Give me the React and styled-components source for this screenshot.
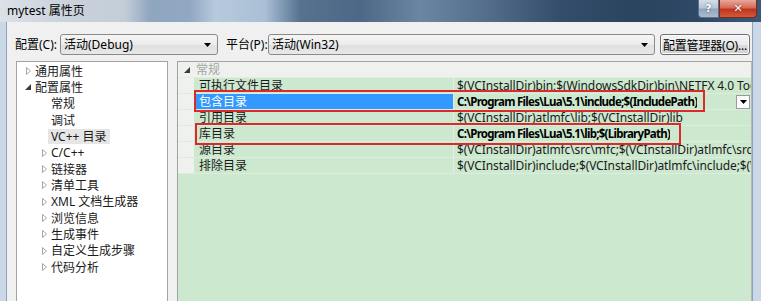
import React from 'react';
import styled, { createGlobalStyle } from 'styled-components';

const GlobalStyle = createGlobalStyle`
  html, body { margin: 0; padding: 0; background: #f0f0f0; overflow: hidden; }
  body { font-family: "Noto Sans", "Noto Sans CJK SC", sans-serif; font-size: 12px; color: #000; }
  * { box-sizing: border-box; }
`;

const Window = styled.div`
  width: 761px;
  height: 301px;
  display: flex;
  flex-direction: column;
  overflow: hidden;
  background: #f0f0f0;
`;

const TitleBar = styled.div`
  height: 22px;
  flex: none;
  display: flex;
  align-items: flex-start;
  justify-content: space-between;
  background: linear-gradient(to right,
    #dbe1e8 0px, #cbd3dc 60px, #c3cdd8 125px, #8fa6bf 150px, #90a8c2 190px,
    #b7c9dc 215px, #aac0d6 265px, #56728f 300px, #4c6886 360px, #6a86a2 420px,
    #56708d 480px, #334d6a 560px, #2a435f 640px, #2f4966 700px, #3d5876 761px);
`;

const TitleText = styled.span`
  padding: 3px 0 0 7px;
  font-size: 12px;
  line-height: 16px;
  color: #000;
`;

const Controls = styled.div`
  display: flex;
  margin-right: 4px;
`;

const CaptionButton = styled.div`
  height: 18px;
  width: ${p => p.$w}px;
  display: flex;
  align-items: center;
  justify-content: center;
  border: 1px solid ${p => (p.$close ? '#7a2a20' : '#5c7188')};
  border-top: none;
  border-radius: ${p => (p.$close ? '0 0 4px 0' : '0 0 0 4px')};
  background: ${p => (p.$close
    ? 'linear-gradient(#e9a89a, #d66b56 45%, #c0341c 55%, #d25a3c)'
    : 'linear-gradient(#d4dfea, #b5c6d8 45%, #91a7be 55%, #a9bdd1)')};
  color: #fff;
  font-family: "DejaVu Sans", sans-serif;
  font-weight: bold;
  font-size: 11px;
  text-shadow: 0 0 2px rgba(0,0,0,0.6);
`;

const Body = styled.div`
  flex: 1;
  display: flex;
  min-height: 0;
`;

const Edge = styled.div`
  width: ${p => p.$w}px;
  flex: none;
  background: #c9d7e6;
  border-${p => p.$side}: 1px solid #8ea3ba;
`;

const Client = styled.div`
  flex: 1;
  min-width: 0;
  display: flex;
  flex-direction: column;
  padding: 12px 0 0 0;
`;

const ConfigRow = styled.div`
  display: flex;
  align-items: center;
  height: 21px;
  padding-left: 8px;
`;

const Label = styled.span`
  width: ${p => p.$w}px;
  flex: none;
  line-height: 21px;
  white-space: nowrap;
`;

const Combo = styled.div`
  width: ${p => p.$w}px;
  height: 21px;
  flex: none;
  display: flex;
  align-items: center;
  justify-content: space-between;
  padding: 0 6px 0 3px;
  border: 1px solid #8a8a8a;
  border-radius: 3px;
  background: linear-gradient(#f5f5f5, #ececec 50%, #dfdfdf 51%, #e8e8e8);
  margin-right: ${p => p.$mr}px;
`;

const ComboText = styled.span`
  line-height: 19px;
  white-space: nowrap;
`;

const Arrow = styled.svg`
  flex: none;
`;

const PushButton = styled.div`
  width: 90px;
  height: 21px;
  flex: none;
  margin-left: 5px;
  display: flex;
  align-items: center;
  justify-content: center;
  border: 1px solid #707070;
  border-radius: 3px;
  background: linear-gradient(#f4f4f4, #ebebeb 50%, #dddddd 51%, #cfcfcf);
  box-shadow: inset 0 0 0 1px #fcfcfc;
  white-space: nowrap;
  letter-spacing: -0.2px;
`;

const Panels = styled.div`
  display: flex;
  gap: 9px;
  margin-top: 6px;
  padding-left: 9px;
  height: 250px;
  flex: none;
`;

const TreePanel = styled.div`
  width: 152px;
  flex: none;
  background: #fff;
  border: 1px solid #a3a3a3;
  padding-top: 1px;
`;

const TreeRow = styled.div`
  height: 16.33px;
  display: flex;
  align-items: center;
  padding-left: ${p => 7 + p.$level * 16}px;
`;

const Twisty = styled.span`
  width: 8px;
  height: 16px;
  flex: none;
  display: flex;
  align-items: center;
  justify-content: center;
`;

const TreeLabel = styled.span`
  padding: 0 3px;
  line-height: 15px;
  white-space: nowrap;
  color: #1a1a1a;
  background: ${p => (p.$selected ? '#e6e6e6' : 'transparent')};
`;

const GridPanel = styled.div`
  width: 575px;
  flex: none;
  position: relative;
  background: #cce8cf;
  border: 1px solid #a3a3a3;
  border-right-color: #b8b8b8;
`;

const CategoryRow = styled.div`
  height: 16px;
  display: flex;
  align-items: center;
  background: #eef1ee;
  padding-left: 6px;
  border-bottom: 1px solid #e4ebe4;
`;

const CategoryText = styled.span`
  margin-left: 6px;
  color: #a2a6a2;
  line-height: 15px;
`;

const PropRow = styled.div`
  display: grid;
  grid-template-columns: 16px 259px 1fr;
  height: 16px;
  border-bottom: 1px solid #dcecdd;
`;

const Gutter = styled.div`
  background: #eef1ee;
`;

const NameCell = styled.div`
  padding-left: 5px;
  line-height: 15px;
  white-space: nowrap;
  overflow: hidden;
  color: ${p => (p.$selected ? '#fff' : '#1a1a1a')};
  background: ${p => (p.$selected ? '#3399ff' : 'transparent')};
`;

const ValueCell = styled.div`
  display: flex;
  align-items: center;
  justify-content: space-between;
  padding: 0 0 0 3px;
  border-left: 1px solid #e2efe3;
  overflow: hidden;
  min-width: 0;
`;

const ValueText = styled.span`
  line-height: 15px;
  white-space: nowrap;
  overflow: hidden;
  font-size: ${p => (p.$bold ? '11.5px' : '12px')};
  font-weight: ${p => (p.$bold ? 700 : 400)};
  color: ${p => (p.$bold ? '#000' : '#1a1a1a')};
  letter-spacing: ${p => (p.$bold ? '-0.72px' : '-0.1px')};
`;

const CellDrop = styled.div`
  width: 14px;
  height: 14px;
  flex: none;
  margin-right: 1px;
  display: flex;
  align-items: center;
  justify-content: center;
  background: #fdfdfd;
  border: 1px solid #9a9a9a;
`;

const Mark = styled.div`
  position: absolute;
  left: ${p => p.$x}px;
  top: ${p => p.$y}px;
  width: ${p => p.$w}px;
  height: ${p => p.$h}px;
  border: 2px solid #dc2a2a;
  pointer-events: none;
`;

const DownArrow = ({ size = 7 }) => (
  <Arrow width={size} height={4} viewBox="0 0 7 4">
    <polygon points="0,0 7,0 3.5,4" fill="#000" />
  </Arrow>
);

const Collapsed = () => (
  <svg width="5" height="8" viewBox="0 0 5 8">
    <polygon points="0.5,0.5 4.5,4 0.5,7.5" fill="#fff" stroke="#a6a6a6" strokeWidth="1" />
  </svg>
);

const Expanded = () => (
  <svg width="6" height="6" viewBox="0 0 6 6">
    <polygon points="6,0 6,6 0,6" fill="#3c3c3c" />
  </svg>
);

const treeItems = [
  { label: '通用属性', level: 0, state: 'c' },
  { label: '配置属性', level: 0, state: 'e' },
  { label: '常规', level: 1 },
  { label: '调试', level: 1 },
  { label: 'VC++ 目录', level: 1, selected: true },
  { label: 'C/C++', level: 1, state: 'c' },
  { label: '链接器', level: 1, state: 'c' },
  { label: '清单工具', level: 1, state: 'c' },
  { label: 'XML 文档生成器', level: 1, state: 'c' },
  { label: '浏览信息', level: 1, state: 'c' },
  { label: '生成事件', level: 1, state: 'c' },
  { label: '自定义生成步骤', level: 1, state: 'c' },
  { label: '代码分析', level: 1, state: 'c' },
];

const props = [
  { name: '可执行文件目录', value: '$(VCInstallDir)bin;$(WindowsSdkDir)bin\\NETFX 4.0 Tools;$(WindowsSdkDir)bin;$(VSInstallDir)Common7\\Tools\\bin' },
  { name: '包含目录', value: 'C:\\Program Files\\Lua\\5.1\\include;$(IncludePath)', bold: true, selected: true },
  { name: '引用目录', value: '$(VCInstallDir)atlmfc\\lib;$(VCInstallDir)lib' },
  { name: '库目录', value: 'C:\\Program Files\\Lua\\5.1\\lib;$(LibraryPath)', bold: true },
  { name: '源目录', value: '$(VCInstallDir)atlmfc\\src\\mfc;$(VCInstallDir)atlmfc\\src\\mfcm;$(VCInstallDir)atlmfc\\src\\atl;$(VCInstallDir)crt\\src' },
  { name: '排除目录', value: '$(VCInstallDir)include;$(VCInstallDir)atlmfc\\include;$(WindowsSdkDir)include;$(FrameworkSDKDir)\\include' },
];

export default function App() {
  return (
    <>
      <GlobalStyle />
      <Window>
        <TitleBar>
          <TitleText>mytest 属性页</TitleText>
          <Controls>
            <CaptionButton $w={21}>?</CaptionButton>
            <CaptionButton $w={38} $close>✕</CaptionButton>
          </Controls>
        </TitleBar>
        <Body>
          <Edge $w={7} $side="right" />
          <Client>
            <ConfigRow>
              <Label $w={45}>配置(C):</Label>
              <Combo $w={158} $mr={8}>
                <ComboText>活动(Debug)</ComboText>
                <DownArrow />
              </Combo>
              <Label $w={42}>平台(P):</Label>
              <Combo $w={387} $mr={0}>
                <ComboText>活动(Win32)</ComboText>
                <DownArrow />
              </Combo>
              <PushButton>配置管理器(O)...</PushButton>
            </ConfigRow>
            <Panels>
              <TreePanel>
                {treeItems.map(it => (
                  <TreeRow key={it.label} $level={it.level}>
                    <Twisty>{it.state === 'c' ? <Collapsed /> : it.state === 'e' ? <Expanded /> : null}</Twisty>
                    <TreeLabel $selected={it.selected}>{it.label}</TreeLabel>
                  </TreeRow>
                ))}
              </TreePanel>
              <GridPanel>
                <CategoryRow>
                  <Expanded />
                  <CategoryText>常规</CategoryText>
                </CategoryRow>
                {props.map(p => (
                  <PropRow key={p.name}>
                    <Gutter />
                    <NameCell $selected={p.selected}>{p.name}</NameCell>
                    <ValueCell>
                      <ValueText $bold={p.bold}>{p.value}</ValueText>
                      {p.selected && (
                        <CellDrop>
                          <DownArrow size={7} />
                        </CellDrop>
                      )}
                    </ValueCell>
                  </PropRow>
                ))}
                <Mark $x={16} $y={28} $w={511} $h={22} />
                <Mark $x={17} $y={61} $w={486} $h={22} />
              </GridPanel>
            </Panels>
          </Client>
          <Edge $w={9} $side="left" />
        </Body>
      </Window>
    </>
  );
}
